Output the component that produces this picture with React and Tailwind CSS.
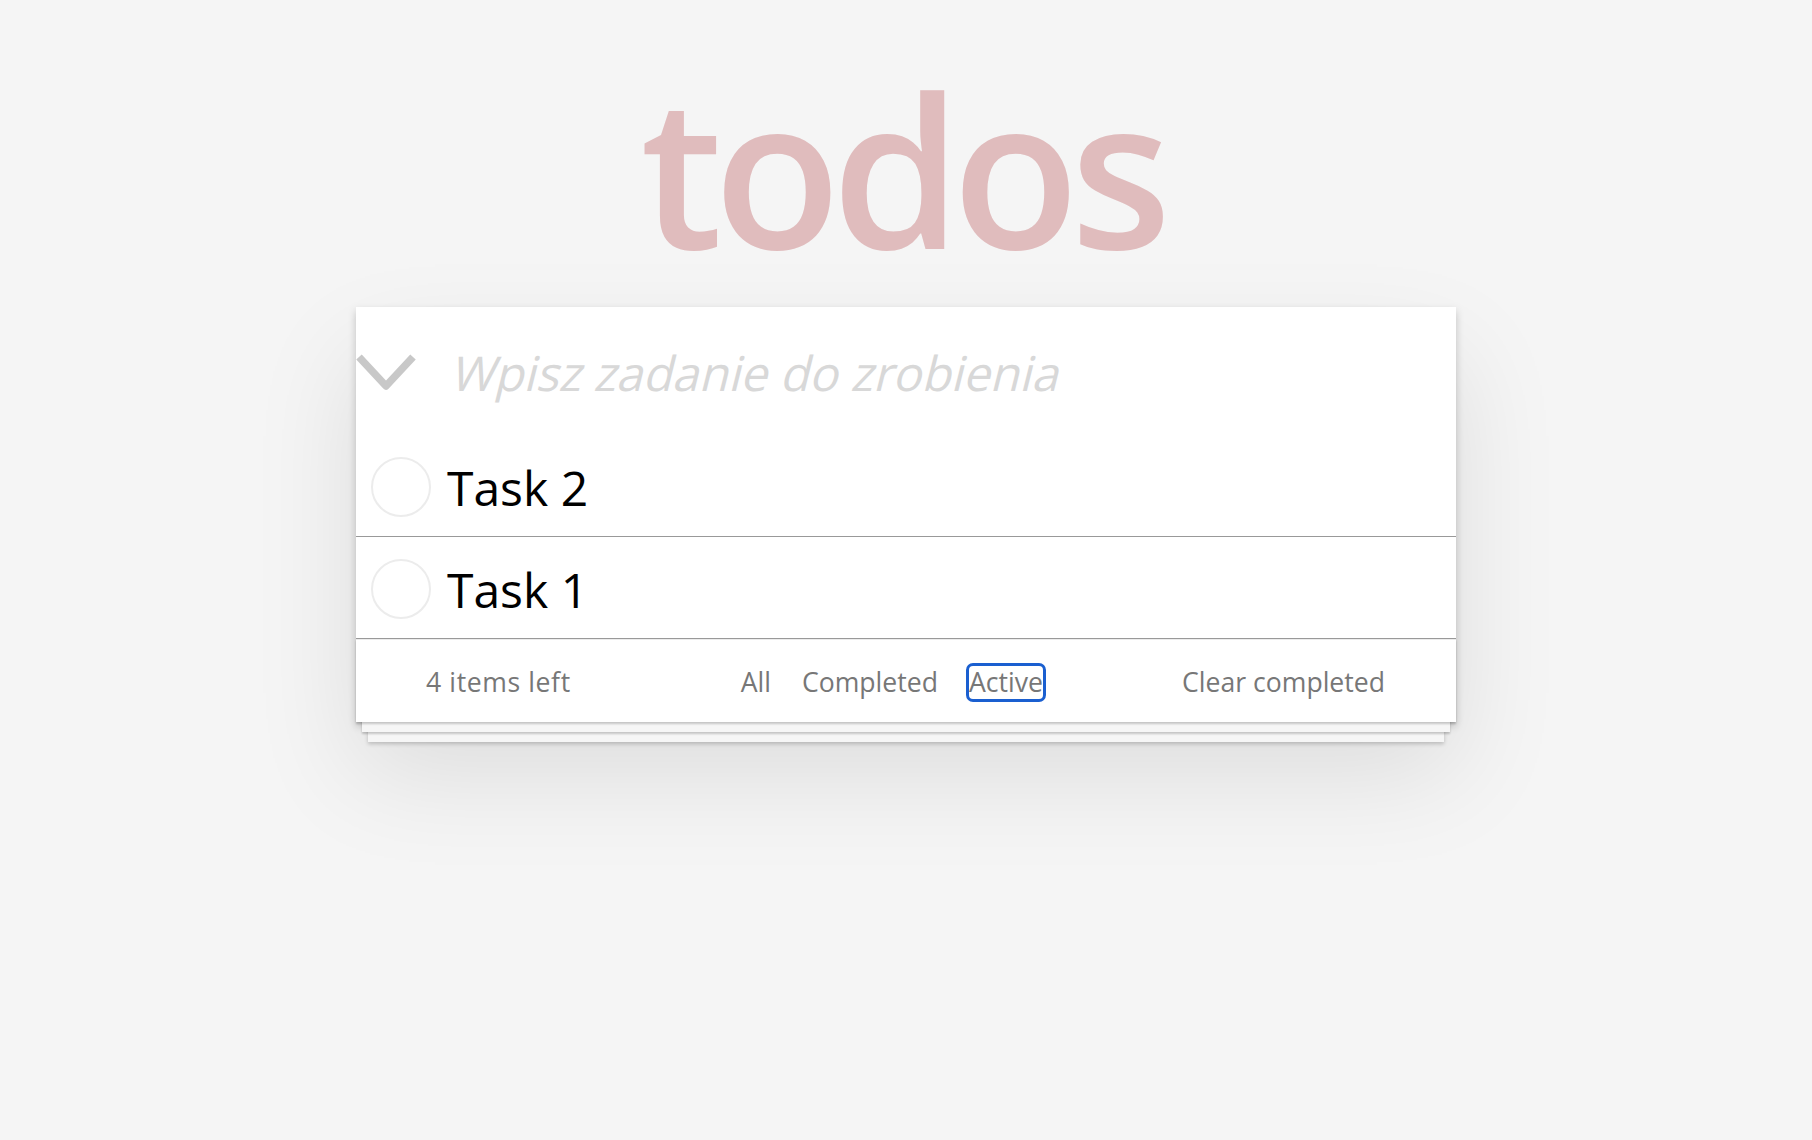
import React from "react";

function Chevron() {
  return (
    <svg width="60" height="40" viewBox="0 0 60 40" className="block">
      <polyline points="3,4 30,33 57,4" fill="none" stroke="#c8c8c8" strokeWidth="7.5" strokeLinecap="butt" strokeLinejoin="round" />
    </svg>
  );
}

function Row({ label }) {
  return (
    <li className="flex items-center h-[102px] border-b border-[#999]">
      <span className="ml-[15px] mt-[2px] w-[60px] h-[60px] rounded-full border-2 border-[#ececec] shrink-0" />
      <span className="ml-[16px] mt-[4px] text-[48px] leading-[58px] text-black">{label}</span>
    </li>
  );
}

export default function App() {
  return (
    <div className="min-h-screen bg-[#f5f5f5] font-['Open_Sans',sans-serif]">
      <div className="w-[1100px] mx-auto pt-[65px]">
        <h1 className="text-[208px] leading-[208px] text-center text-[#e0bcbd] font-semibold tracking-[-9px] pr-[9px]">todos</h1>
        <section className="mt-[34px] bg-white shadow-[0_4px_8px_0_rgba(0,0,0,0.2),0_50px_100px_0_rgba(0,0,0,0.1)]">
          <div className="flex items-center h-[128px] pt-[3px]">
            <div className="w-[60px] flex justify-center">
              <Chevron />
            </div>
            <span className="ml-[38px] inline-block -skew-x-[14deg] text-[48px] text-[#d8d8d8] leading-[67px]">Wpisz zadanie do zrobienia</span>
          </div>
          <ul>
            <Row label="Task 2" />
            <Row label="Task 1" />
          </ul>
          <footer className="flex items-center h-[83px] pt-[3px] border-t border-[#ececec] pl-[70px] pr-[71px] text-[26.6px] text-[#777] shadow-[0_2px_2px_rgba(0,0,0,0.2),0_16px_0_-6px_#f6f6f6,0_18px_2px_-6px_rgba(0,0,0,0.2),0_32px_0_-12px_#f6f6f6,0_34px_4px_-12px_rgba(0,0,0,0.2)]">
            <span className="tracking-[0.6px]">4 items left</span>
            <div className="flex items-center gap-[31px] ml-[170px]">
              <span>All</span>
              <span>Completed</span>
              <span className="outline-3 outline-solid outline-[#1a5fd0] rounded-[4px] leading-[33px]">Active</span>
            </div>
            <span className="ml-auto">Clear completed</span>
          </footer>
        </section>
      </div>
    </div>
  );
}
